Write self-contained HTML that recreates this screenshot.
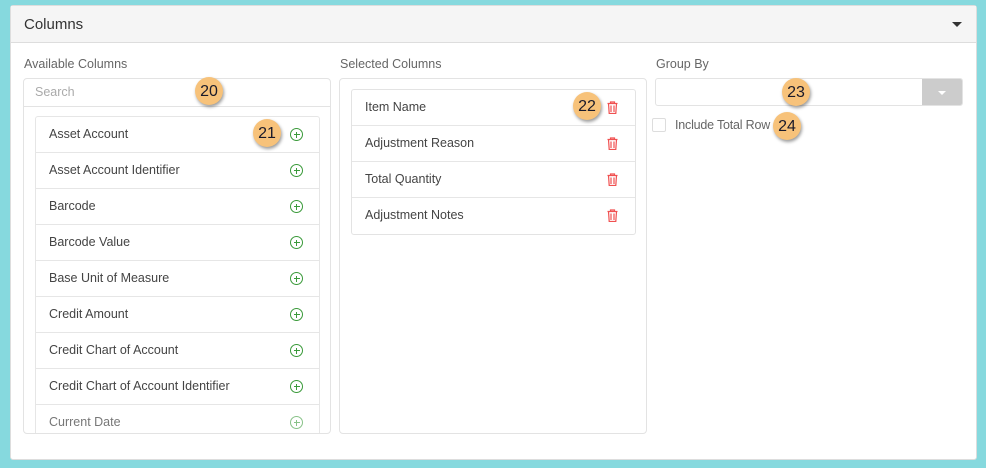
<!DOCTYPE html>
<html><head><style>
*{box-sizing:border-box;margin:0;padding:0}
body{width:986px;height:468px;background:#86d9de;font-family:"Liberation Sans",sans-serif;position:relative;overflow:hidden}
.panel{position:absolute;left:10px;top:5px;width:967px;height:455px;background:#fff;border:1px solid #ddd;border-radius:3px}
.hdr{height:37px;background:#f5f5f5;border-bottom:1px solid #ddd;font-size:15px;color:#333;padding:10px 0 0 13px}
.caret{position:absolute;right:14px;top:16px;border-left:5px solid transparent;border-right:5px solid transparent;border-top:5px solid #333}
.lbl{position:absolute;font-size:12.5px;color:#666}
.box{position:absolute;border:1px solid #e3e3e3;border-radius:4px;background:#fff;overflow:hidden}
.row{position:absolute;height:36px;border-bottom:1px solid #e6e6e6;font-size:12.5px;color:#444;padding:10px 0 0 13px;width:100%;left:0}
.plus{position:absolute;right:16px;top:11px;width:13px;height:13px;border:1.3px solid #3a9a3a;border-radius:50%}
.plus:before{content:"";position:absolute;left:2.5px;top:4.7px;width:6px;height:1.4px;background:#3a9a3a}
.plus:after{content:"";position:absolute;left:4.7px;top:2.5px;width:1.4px;height:6px;background:#3a9a3a}
.badge{position:absolute;width:28px;height:28px;border-radius:50%;background:#f7c27a;box-shadow:1px 2px 3px rgba(0,0,0,.4);font-size:16px;color:#1a1a2a;text-align:center;line-height:29px}
.tr{position:absolute;right:17px;top:11px}
</style></head><body>
<div class="panel">
<div class="hdr">Columns</div><div class="caret"></div>
</div>
<div class="lbl" style="left:24px;top:57px">Available Columns</div>
<div class="lbl" style="left:340px;top:57px">Selected Columns</div>
<div class="lbl" style="left:656px;top:57px">Group By</div>

<div class="box" style="left:23px;top:78px;width:308px;height:356px">
 <div style="height:28px;border-bottom:1px solid #e3e3e3;font-size:12.5px;color:#aaa;padding:6px 0 0 11px">Search</div>
 <div style="position:absolute;left:11px;top:37px;width:285px;height:330px;border:1px solid #e6e6e6;border-radius:3px">
  <div class="row" style="top:0">Asset Account<span class="plus"></span></div>
  <div class="row" style="top:36px">Asset Account Identifier<span class="plus"></span></div>
  <div class="row" style="top:72px">Barcode<span class="plus"></span></div>
  <div class="row" style="top:108px">Barcode Value<span class="plus"></span></div>
  <div class="row" style="top:144px">Base Unit of Measure<span class="plus"></span></div>
  <div class="row" style="top:180px">Credit Amount<span class="plus"></span></div>
  <div class="row" style="top:216px">Credit Chart of Account<span class="plus"></span></div>
  <div class="row" style="top:252px">Credit Chart of Account Identifier<span class="plus"></span></div>
  <div class="row" style="top:288px;color:#777">Current Date<span class="plus" style="opacity:.6"></span></div>
 </div>
</div>

<div class="box" style="left:339px;top:78px;width:308px;height:356px">
 <div style="position:absolute;left:11px;top:10px;width:285px;height:146px;border:1px solid #e3e3e3;border-radius:3px;overflow:hidden">
  <div class="row" style="top:0">Item Name<svg class="tr" width="11" height="13" viewBox="0 0 11 13" fill="none" stroke="#f05050" stroke-width="1.2"><path d="M0.5 2.5h10M3.5 2.5V1h4v1.5M1.5 2.5l.7 10h6.6l.7-10M4 4.5v6.5M7 4.5v6.5"/></svg></div>
  <div class="row" style="top:36px">Adjustment Reason<svg class="tr" width="11" height="13" viewBox="0 0 11 13" fill="none" stroke="#f05050" stroke-width="1.2"><path d="M0.5 2.5h10M3.5 2.5V1h4v1.5M1.5 2.5l.7 10h6.6l.7-10M4 4.5v6.5M7 4.5v6.5"/></svg></div>
  <div class="row" style="top:72px">Total Quantity<svg class="tr" width="11" height="13" viewBox="0 0 11 13" fill="none" stroke="#f05050" stroke-width="1.2"><path d="M0.5 2.5h10M3.5 2.5V1h4v1.5M1.5 2.5l.7 10h6.6l.7-10M4 4.5v6.5M7 4.5v6.5"/></svg></div>
  <div class="row" style="top:108px;border-bottom:none">Adjustment Notes<svg class="tr" width="11" height="13" viewBox="0 0 11 13" fill="none" stroke="#f05050" stroke-width="1.2"><path d="M0.5 2.5h10M3.5 2.5V1h4v1.5M1.5 2.5l.7 10h6.6l.7-10M4 4.5v6.5M7 4.5v6.5"/></svg></div>
 </div>
</div>

<div class="box" style="left:655px;top:78px;width:308px;height:28px;border-radius:3px">
 <div style="position:absolute;right:0;top:0;width:40px;height:28px;background:#ccc"><div style="position:absolute;left:16px;top:12px;border-left:4px solid transparent;border-right:4px solid transparent;border-top:4px solid #fff"></div></div>
</div>
<div style="position:absolute;left:652px;top:118px;width:14px;height:14px;border:1px solid #ddd;border-radius:2px;background:#fff"></div>
<div class="lbl" style="left:675px;top:118px;letter-spacing:-0.2px">Include Total Row</div>

<div class="badge" style="left:195px;top:77px">20</div>
<div class="badge" style="left:253px;top:119px">21</div>
<div class="badge" style="left:573px;top:92px">22</div>
<div class="badge" style="left:782px;top:78px">23</div>
<div class="badge" style="left:773px;top:112px">24</div>
</body></html>
